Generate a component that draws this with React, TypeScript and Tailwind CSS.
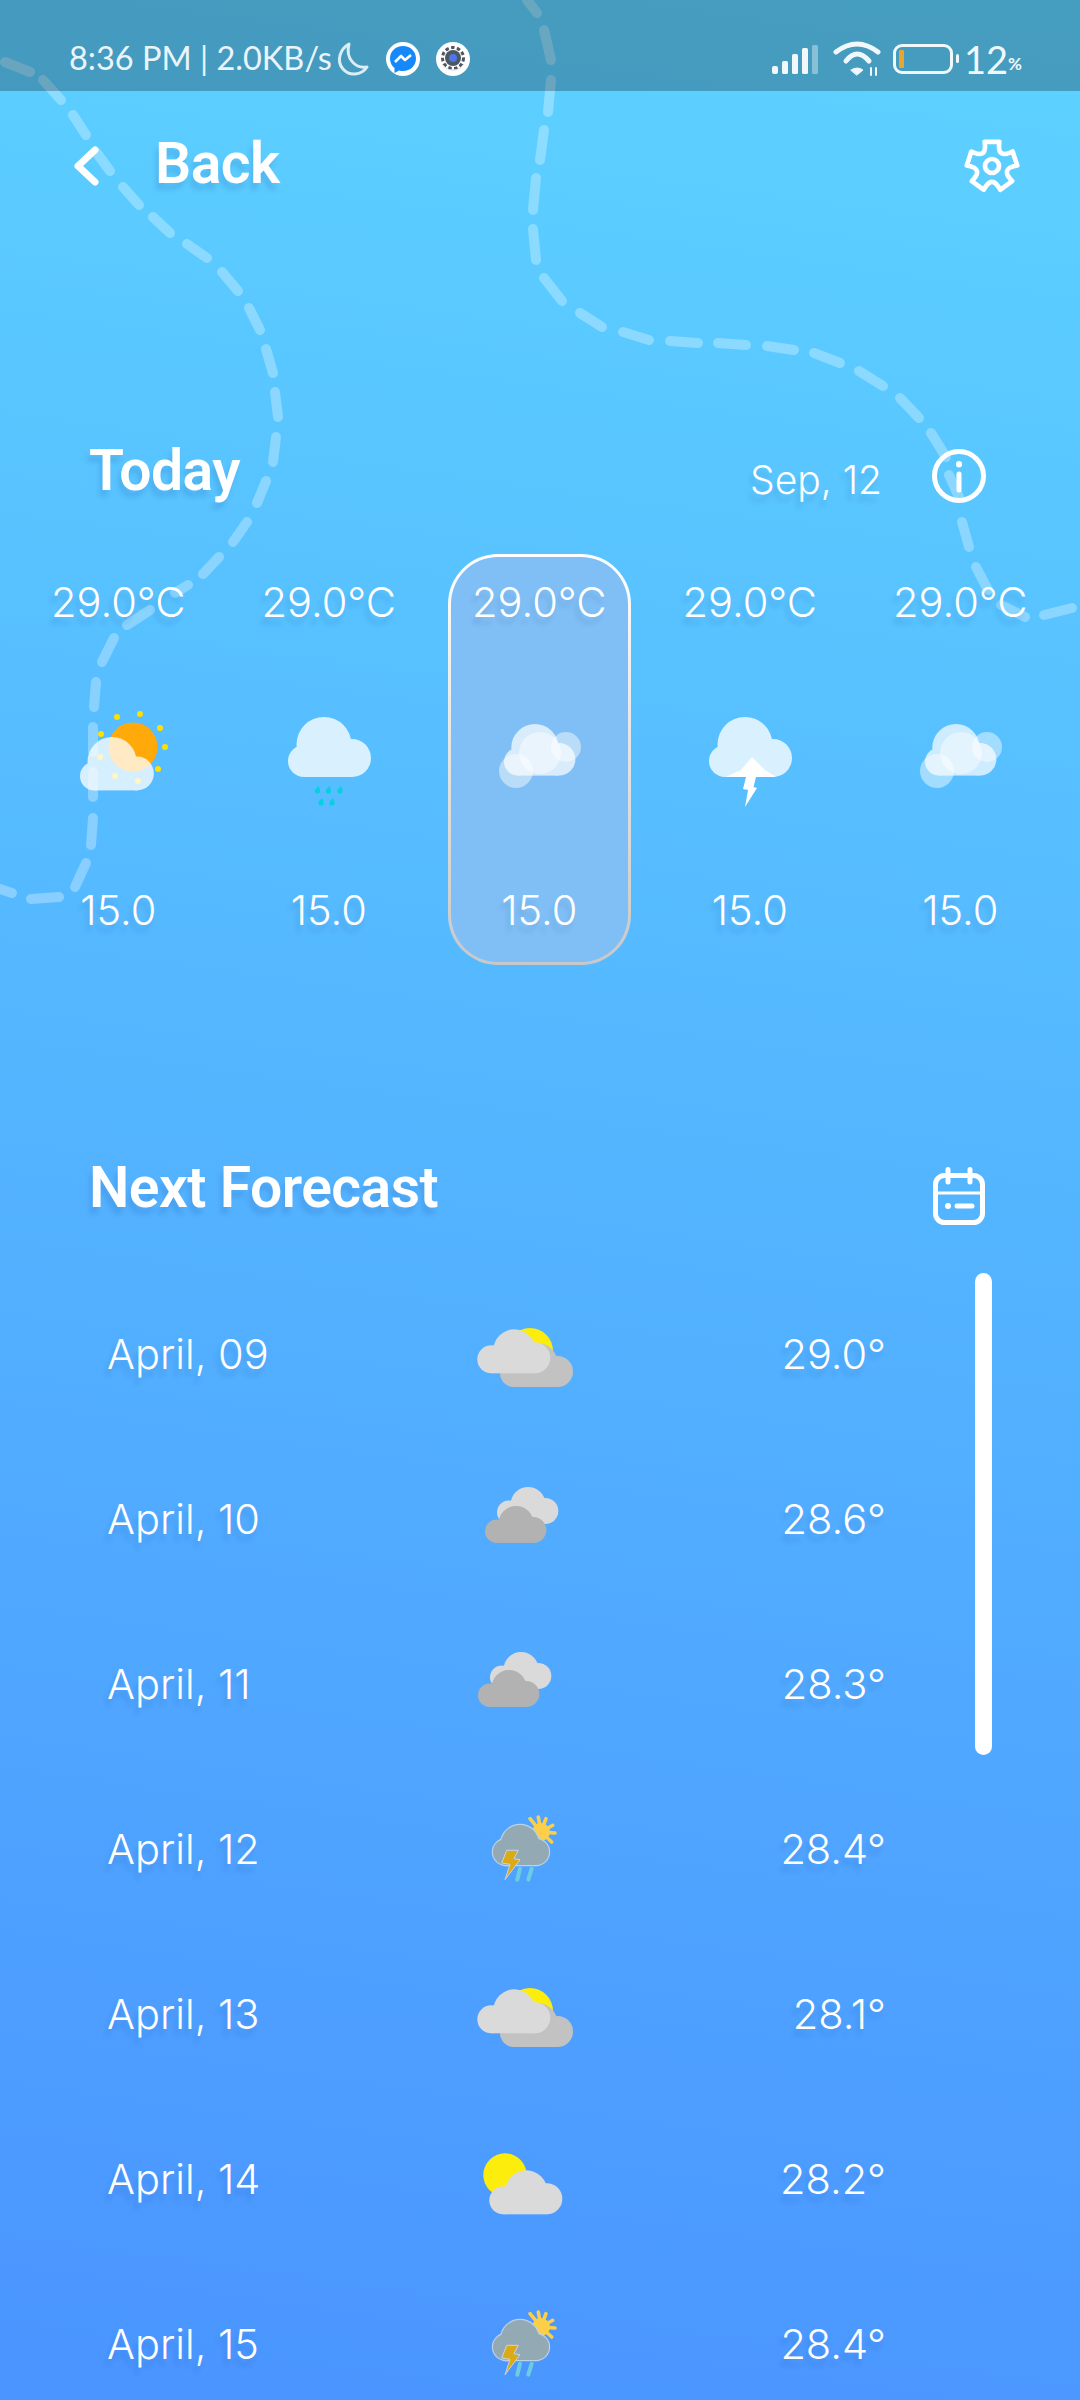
const shadow = "[text-shadow:-3px_7px_5px_rgba(0,50,130,0.13)]";

// decorative dashed trails behind the page
const DASHES = [
  [5, 62, 30, 72], [43, 80, 61, 100], [73, 115, 86, 135], [96, 152, 110, 171], [123, 187, 139, 205],
  [153, 217, 170, 233], [187, 244, 207, 258], [222, 272, 238, 291], [249, 308, 260, 330], [266, 349, 273, 373],
  [275, 392, 278, 417], [276, 437, 273, 462], [266, 481, 257, 503], [247, 522, 233, 542], [219, 557, 203, 574],
  [188, 585, 175, 593], [150, 610, 127, 625], [114, 638, 102, 662], [96, 682, 94, 707], [93, 727, 93, 752],
  [93, 772, 93, 797], [93, 818, 91, 845], [86, 863, 75, 887], [59, 897, 31, 899], [12, 893, -3, 888],
  [527, 0, 537, 13], [544, 30, 551, 60], [551, 80, 548, 112], [544, 130, 540, 160], [536, 178, 533, 210],
  [533, 229, 536, 260], [544, 278, 562, 301], [580, 313, 602, 327], [623, 332, 649, 340], [670, 341, 698, 343],
  [718, 343, 746, 345], [767, 346, 794, 350], [814, 353, 840, 363], [859, 371, 883, 386], [900, 398, 919, 418],
  [931, 433, 946, 457], [949, 475, 959, 497], [962, 522, 969, 547], [976, 567, 988, 590], [1001, 605, 1025, 617],
  [1044, 615, 1072, 608],
];

type CloudProps = { x: number; y: number; s?: number; fill: string; opacity?: number; flat?: boolean };

function Cloud({ x, y, s = 1, fill, opacity = 1, flat }: CloudProps) {
  return (
    <g transform={`translate(${x} ${y}) scale(${s})`} fill={fill} opacity={opacity}>
      {flat ? (
        <>
          <circle cx="37" cy="21" r="21" />
          <circle cx="14" cy="30" r="14" />
          <circle cx="57.5" cy="28.5" r="15.5" />
          <rect x="14" y="24" width="44" height="20" />
        </>
      ) : (
        <>
          <circle cx="36" cy="27.5" r="27.5" />
          <circle cx="16" cy="44" r="16" />
          <circle cx="64" cy="41" r="19" />
          <rect x="16" y="36" width="48" height="24" />
        </>
      )}
    </g>
  );
}

function SunnyCloud() {
  const dots = [[74, 17], [97, 14], [117, 28], [122, 47], [115, 69], [95, 81], [72, 76], [57, 57], [58, 34]];
  return (
    <svg width="150" height="110" viewBox="0 0 150 110">
      {dots.map(([cx, cy]) => (
        <circle key={cx} cx={cx} cy={cy} r="3" fill="#fde000" />
      ))}
      <circle cx="90" cy="47" r="24.5" fill="#ffa90a" />
      <Cloud x={37} y={37} s={0.89} fill="#fff" opacity={0.76} />
    </svg>
  );
}

function RainCloud() {
  const drops = [[29.5, 90], [40.5, 90], [52, 90], [33, 102], [44, 102]];
  return (
    <svg width="150" height="110" viewBox="0 0 150 110">
      <Cloud x={34} y={17} fill="#d9f1ff" />
      {drops.map(([cx, cy]) => (
        <path key={cx} transform={`translate(${cx + 34} ${cy})`} d="M1 -4 C-1 -2 -2.6 -0.6 -2.6 1 A2.6 2.6 0 0 0 2.6 1 C2.6 -1 1.6 -2.6 1 -4Z" fill="#06cfe2" />
      ))}
    </svg>
  );
}

function SoftClouds() {
  return (
    <svg width="150" height="110" viewBox="0 0 150 110">
      <circle cx="102" cy="47" r="15" fill="#fff" opacity="0.45" />
      <circle cx="52" cy="71" r="17" fill="#fff" opacity="0.45" />
      <Cloud x={40} y={24} s={0.86} fill="#fff" opacity={0.7} />
      <circle cx="76" cy="53" r="21" fill="#fff" opacity="0.45" />
    </svg>
  );
}

function BoltCloud() {
  return (
    <svg width="150" height="110" viewBox="0 0 150 110">
      <Cloud x={34} y={17} fill="#d9f1ff" />
      <path d="M51 77 L66 70 L77 57 L90 70 L101 77Z" fill="#fff" />
      <path d="M71 77 L68 89 L73 90 L70 107 L82 88 L78.5 87 L81 77Z" fill="#fff" />
    </svg>
  );
}

function DoubleCloudSun() {
  return (
    <svg width="120" height="100" viewBox="0 0 120 100">
      <circle cx="65" cy="46" r="23" fill="#fded0c" />
      <Cloud x={35} y={38} fill="#c2c2c2" flat />
      <Cloud x={12.3} y={24.3} fill="#dadada" flat />
    </svg>
  );
}

function GreyClouds({ bx, fx, fy }: { bx: number; fx: number; fy: number }) {
  return (
    <svg width="120" height="100" viewBox="0 0 120 100">
      <Cloud x={bx} y={17} s={0.84} fill="#dadada" flat />
      <Cloud x={fx} y={fy} s={0.84} fill="#b2b2b2" flat />
    </svg>
  );
}

function SunAndCloud() {
  return (
    <svg width="120" height="100" viewBox="0 0 120 100">
      <circle cx="40" cy="45" r="21.7" fill="#fded0c" />
      <Cloud x={24.3} y={40.3} fill="#dadada" flat />
    </svg>
  );
}

function StormCloud() {
  const rays = [[65, 18.7], [73.3, 17], [81, 18.7], [87.7, 25.3], [90, 33], [86.7, 42]];
  return (
    <svg width="120" height="100" viewBox="0 0 120 100">
      {rays.map(([x2, y2]) => (
        <line key={x2} x1="76" y1="32" x2={x2} y2={y2} stroke="#fbcf47" strokeWidth="3.6" strokeLinecap="round" />
      ))}
      <circle cx="76" cy="32" r="9" fill="#fbcf47" />
      <g stroke="#bcd2e6" strokeWidth="2.4">
        <circle cx="55" cy="44" r="19" fill="#bcd2e6" />
        <circle cx="41" cy="52" r="13" fill="#bcd2e6" />
        <circle cx="71" cy="52" r="13" fill="#bcd2e6" />
        <rect x="41" y="52" width="30" height="13" fill="#bcd2e6" />
      </g>
      <g fill="#93a9b4">
        <circle cx="55" cy="44" r="19" />
        <circle cx="41" cy="52" r="13" />
        <circle cx="71" cy="52" r="13" />
        <rect x="41" y="52" width="30" height="13" />
      </g>
      <path d="M41.7 50.3 L53.3 50.3 L49 58.7 L55 59.7 L40 79.7 L45 64.3 L36.7 63Z" fill="#dcaa14" stroke="#c2d7ea" strokeWidth="1" />
      <path d="M55 68.7 L52.3 79.7 M66.7 68.7 L63.3 79.7" stroke="#6ccde0" strokeWidth="4" strokeLinecap="round" />
    </svg>
  );
}

const TODAY = [
  { id: 1, icon: <SunnyCloud /> },
  { id: 2, icon: <RainCloud /> },
  { id: 3, icon: <SoftClouds />, active: true },
  { id: 4, icon: <BoltCloud /> },
  { id: 5, icon: <SoftClouds /> },
];

const FORECAST = [
  { date: "April, 09", temp: "29.0°", icon: <DoubleCloudSun /> },
  { date: "April, 10", temp: "28.6°", icon: <GreyClouds bx={32} fx={20} fy={36} /> },
  { date: "April, 11", temp: "28.3°", icon: <GreyClouds bx={25} fx={13} fy={35} /> },
  { date: "April, 12", temp: "28.4°", icon: <StormCloud /> },
  { date: "April, 13", temp: "28.1°", icon: <DoubleCloudSun /> },
  { date: "April, 14", temp: "28.2°", icon: <SunAndCloud /> },
  { date: "April, 15", temp: "28.4°", icon: <StormCloud /> },
];

function StatusBar() {
  return (
    <div className="flex h-[91px] items-center justify-between bg-black/25 pl-[69px] pr-[58px] pt-[26px] font-['Lato'] text-[#e9f5fa]">
      <div className="flex items-center">
        <span className="w-[264px] whitespace-nowrap text-[32.5px] leading-none">8:36 PM | 2.0KB/s</span>
        <svg width="36" height="36" viewBox="0 0 36 36" className="ml-[1px]" fill="none" stroke="#dcedf4" strokeWidth="3">
          <path d="M15 3 C6 8 2 20 9 28 C15 35 27 35 33 26 C22 28 11 18 15 3Z" strokeLinejoin="round" />
        </svg>
        <svg width="34" height="34" viewBox="0 0 34 34" className="ml-[16px]">
          <circle cx="17" cy="17" r="17" fill="#fff" />
          <path d="M17 4 C9.5 4 4 9.5 4 16.5 C4 20.5 5.8 23.8 8.5 26 L8.5 31 L13 28.5 C14.3 28.9 15.6 29 17 29 C24.5 29 30 23.5 30 16.5 C30 9.5 24.5 4 17 4Z" fill="#1588fb" />
          <path d="M9 20 L15 14 L19 18 L25 13" fill="none" stroke="#fff" strokeWidth="2.6" strokeLinejoin="round" />
        </svg>
        <svg width="34" height="34" viewBox="0 0 34 34" className="ml-[16px]">
          <circle cx="17" cy="17" r="17" fill="#fff" />
          <circle cx="17" cy="16" r="10.5" fill="none" stroke="#4d5661" strokeWidth="3" strokeDasharray="3.5 2.4" />
          <circle cx="17" cy="16" r="8" fill="#4d5661" />
          <circle cx="17" cy="16" r="4" fill="#4a78e8" />
          <path d="M6 22 A13 13 0 0 0 28 22" fill="none" stroke="#d4d7da" strokeWidth="1" />
        </svg>
      </div>
      <div className="flex items-center">
        <svg width="50" height="40" viewBox="0 0 50 40" className="mt-[6px]" fill="#f1f8fb">
          <rect x="0" y="24" width="6" height="8" rx="2" />
          <rect x="10" y="19" width="6" height="13" rx="1.5" />
          <rect x="20" y="12" width="6" height="20" rx="1.5" />
          <rect x="30" y="6" width="6" height="26" rx="1.5" />
          <rect x="40" y="3" width="6" height="29" rx="1.5" opacity="0.4" />
        </svg>
        <svg width="50" height="40" viewBox="0 0 50 40" className="ml-[11px]" fill="none" stroke="#f1f8fb" strokeLinecap="round">
          <path d="M3 13 Q24 -3 45 13" strokeWidth="5" />
          <path d="M13 22 Q24 8 36 22" strokeWidth="5" />
          <path d="M18 31 Q24 27 30 31 L24 36Z" fill="#f1f8fb" strokeWidth="1" />
          <path d="M38 29 V36 M43 29 V36" strokeWidth="2" />
        </svg>
        <div className="ml-[10px] flex items-center">
          <div className="flex h-[30px] w-[60px] items-center rounded-[9px] border-[3px] border-[#f1f8fb] pl-[3px]">
            <div className="h-[18px] w-[5px] rounded-[1px] bg-[#e8a52f]" />
          </div>
          <div className="ml-[3px] h-[9px] w-[3px] rounded-full bg-[#f1f8fb]" />
        </div>
        <span className="ml-[5px] text-[38px] leading-none text-[#f1f8fb]">12</span>
        <span className="mt-[10px] text-[17px] font-bold leading-none text-[#f1f8fb]">%</span>
      </div>
    </div>
  );
}

export default function App() {
  return (
    <div className="relative h-[2400px] w-[1080px] overflow-hidden bg-[linear-gradient(188deg,#5dd3ff_0%,#4a94ff_100%)] font-['Inter',sans-serif] text-white">
      <svg width="1080" height="2400" className="absolute inset-0" fill="none" stroke="#fff" strokeOpacity="0.3" strokeWidth="10" strokeLinecap="round">
        {DASHES.map(([x1, y1, x2, y2]) => (
          <line key={`${x1}-${y1}`} x1={x1} y1={y1} x2={x2} y2={y2} />
        ))}
      </svg>

      <div className="relative">
        <StatusBar />

        <header className="flex h-[150px] items-center justify-between pl-[74px] pr-[60px]">
          <div className="flex items-center">
            <svg width="30" height="44" viewBox="0 0 30 44" fill="none" stroke="#fff" strokeWidth="7" strokeLinecap="round" strokeLinejoin="round">
              <path d="M21 6 L4 22 L21 38" />
            </svg>
            <span className={`mb-[5px] ml-[51px] font-['Roboto'] text-[57px] font-semibold leading-none tracking-[-0.5px] ${shadow}`}>Back</span>
          </div>
          <svg width="56" height="56" viewBox="0 0 60 60" fill="none" stroke="#fff" strokeWidth="5" strokeLinejoin="round">
            <path d="M22.1 4.2 L37.9 4.2 Q35 23.1 52.1 14.5 L57 29.5 Q38.1 32.6 51.6 46.2 L38.8 55.5 Q30 38.5 21.2 55.5 L8.4 46.2 Q21.9 32.6 3 29.5 L7.9 14.5 Q25 23.1 22.1 4.2Z" />
            <circle cx="30" cy="30" r="7.5" />
          </svg>
        </header>

        <section className="mt-[200px] flex h-[70px] items-center justify-between pl-[89px] pr-[94px]">
          <h2 className={`mb-[12px] font-['Roboto'] text-[57px] font-semibold leading-none tracking-[-0.5px] ${shadow}`}>Today</h2>
          <div className="flex items-center gap-[50px]">
            <span className={`mt-[6px] text-[39px] font-[350] leading-none ${shadow}`}>Sep, 12</span>
            <svg width="54" height="56" viewBox="0 0 54 56" fill="none" stroke="#fff" strokeWidth="5" strokeLinecap="round">
              <circle cx="27" cy="28" r="24.5" />
              <path d="M27 26 V42" />
              <path d="M27 16 V16.5" strokeWidth="6" />
            </svg>
          </div>
        </section>

        <section className="mt-[43px] flex pl-[13px]">
          {TODAY.map((day) => (
            <div key={day.id} className="flex w-[210.5px] justify-center">
              <div className={`w-[183px] rounded-[50px] p-[3px] ${day.active ? "bg-gradient-to-b from-white to-[#c8c8c8]" : ""}`}>
                <div className={`flex h-[405px] flex-col items-center rounded-[47px] pt-[21px] ${day.active ? "bg-[#80bff5]" : ""}`}>
                  <span className={`whitespace-nowrap text-[41.5px] font-[350] leading-[48px] ${shadow}`}>29.0°C</span>
                  <div className="mt-[74px]">{day.icon}</div>
                  <span className={`mt-[76px] text-[41.5px] font-[350] leading-[48px] ${shadow}`}>15.0</span>
                </div>
              </div>
            </div>
          ))}
        </section>

        <section className="mt-[195px] flex h-[70px] items-start justify-between pl-[89px] pr-[95px]">
          <h2 className={`font-['Roboto'] text-[57px] font-semibold leading-[56px] tracking-[-0.5px] ${shadow}`}>Next Forecast</h2>
          <svg width="52" height="58" viewBox="0 0 52 58" className="mt-[7px]" fill="none" stroke="#fff" strokeLinecap="round">
            <rect x="2.5" y="8.5" width="47" height="47" rx="9" strokeWidth="5" />
            <path d="M2.5 26 H49.5" strokeWidth="3" />
            <path d="M15 2.5 V15 M37 2.5 V15" strokeWidth="5" />
            <path d="M24 39 H39" strokeWidth="5" />
            <path d="M15 39 V39.1" strokeWidth="6" />
          </svg>
        </section>

        <div className="mt-[42px]">
          {FORECAST.map((row) => (
            <div key={row.date} className="flex h-[165px] items-center pl-[107px]">
              <span className={`w-[261px] text-[41.5px] font-[350] leading-none ${shadow}`}>{row.date}</span>
              <div className="flex w-[314px] justify-center">{row.icon}</div>
              <span className={`w-[204px] text-right text-[41.5px] font-[350] leading-none ${shadow}`}>{row.temp}</span>
            </div>
          ))}
        </div>
      </div>

      <div className="absolute left-[975px] top-[1273px] h-[482px] w-[17px] rounded-full bg-white" />
    </div>
  );
}
